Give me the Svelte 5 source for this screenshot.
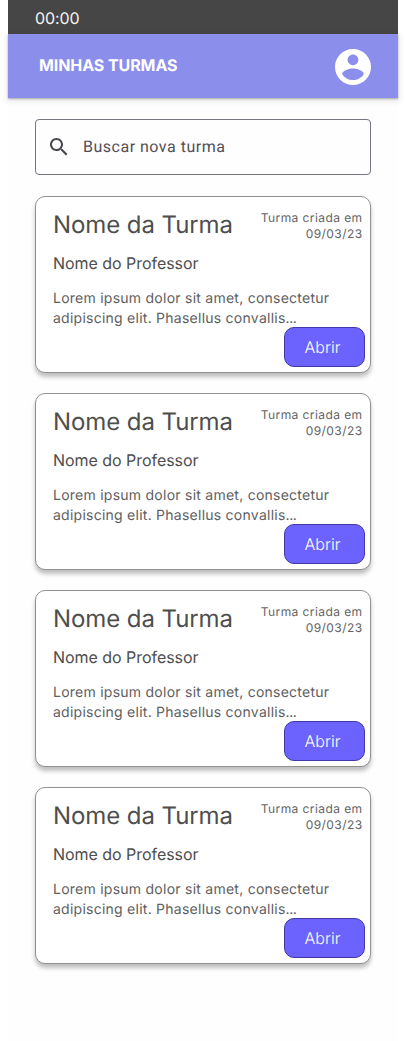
<script>
  const classes = Array.from({ length: 4 }, (_, id) => ({
    id,
    name: 'Nome da Turma',
    teacher: 'Nome do Professor',
    created: '09/03/23',
    description: ['Lorem ipsum dolor sit amet, consectetur', 'adipiscing elit. Phasellus convallis', '...']
  }));
</script>

<main class="screen">
  <div class="status">00:00</div>
  <header class="topbar">
    <h1>MINHAS TURMAS</h1>
    <svg class="avatar" viewBox="2 2 20 20" aria-hidden="true">
      <path fill="#fff" d="M12 2C6.48 2 2 6.48 2 12s4.48 10 10 10 10-4.48 10-10S17.52 2 12 2zm0 3c1.66 0 3 1.34 3 3s-1.34 3-3 3-3-1.34-3-3 1.34-3 3-3zm0 14.200c-2.500 0-4.710-1.280-6-3.220.030-1.990 4-3.080 6-3.080 1.990 0 5.970 1.090 6 3.080-1.290 1.940-3.500 3.220-6 3.220z" />
    </svg>
  </header>

  <div class="content">
    <div class="search">
      <svg viewBox="0 0 24 24" aria-hidden="true">
        <path fill="#49454f" d="M15.500 14h-.790l-.280-.270C15.410 12.590 16 11.110 16 9.500 16 5.910 13.090 3 9.500 3S3 5.910 3 9.500 5.910 16 9.500 16c1.610 0 3.090-.590 4.230-1.570l.270.280v.790l5 4.990L20.490 19l-4.990-5zm-6 0C7.010 14 5 11.990 5 9.500S7.010 5 9.500 5 14 7.010 14 9.500 11.990 14 9.500 14z" />
      </svg>
      <span>Buscar nova turma</span>
    </div>

    {#each classes as item (item.id)}
      <article class="card">
        <div class="heading">
          <h2>{item.name}</h2>
          <p class="date">Turma criada em<br />{item.created}</p>
        </div>
        <p class="teacher">{item.teacher}</p>
        <p class="description">{item.description[0]}<br />{item.description[1]}<span class="dots">{item.description[2]}</span></p>
        <button type="button">Abrir</button>
      </article>
    {/each}
  </div>
</main>

<style>
  :global(body) {
    background: #fff;
  }

  .screen {
    box-sizing: border-box;
    width: 390px;
    height: 1041px;
    margin: 0 8px;
    background: #fefefe;
    font-family: Inter, sans-serif;
    color: #4e4e4e;
    text-rendering: geometricPrecision;
  }

  h1, h2, p {
    margin: 0;
    font-weight: 400;
  }

  .status {
    box-sizing: border-box;
    height: 34px;
    padding: 8px 27px 0;
    background: #464646;
    color: #f4f4f4;
    font-size: 16px;
    line-height: 20px;
    letter-spacing: -0.12px;
  }

  .topbar {
    box-sizing: border-box;
    height: 64px;
    display: flex;
    align-items: center;
    justify-content: space-between;
    padding: 0 27px 0 31px;
    background: #8c8eec;
    box-shadow: 0 1px 2px rgba(0, 0, 0, 0.3), 0 2px 6px 2px rgba(0, 0, 0, 0.07);
  }

  h1 {
    padding-bottom: 2px;
    color: #fff;
    font-size: 16px;
    line-height: 20px;
    font-weight: 700;
    letter-spacing: -0.08px;
  }

  .avatar {
    width: 36px;
    height: 36px;
    margin-top: 2px;
  }

  .content {
    display: flex;
    flex-direction: column;
    padding: 21px 27px 0;
  }

  .search {
    box-sizing: border-box;
    height: 56px;
    margin-bottom: 21px;
    display: flex;
    align-items: center;
    gap: 12px;
    padding-left: 11px;
    border: 1px solid #79747e;
    border-radius: 4px;
    color: #524e58;
    font: 16px/24px Roboto, sans-serif;
    letter-spacing: 0.5px;
  }

  .search svg {
    width: 24px;
    height: 24px;
  }

  .card {
    box-sizing: border-box;
    height: 177px;
    margin-bottom: 20px;
    display: flex;
    flex-direction: column;
    padding: 11px 5px 5px 17px;
    border: 1px solid #919191;
    border-radius: 10px;
    background: #fff;
    box-shadow: 0 4px 4px rgba(0, 0, 0, 0.25);
  }

  .card > * {
    flex-shrink: 0;
  }

  .heading {
    height: 45px;
    display: flex;
    justify-content: space-between;
    padding-right: 2px;
  }

  h2 {
    padding-top: 1px;
    font-size: 24px;
    line-height: 32px;
    letter-spacing: -0.08px;
  }

  .date {
    padding-top: 2px;
    padding-right: 0.5px;
    color: #646464;
    font-size: 12px;
    line-height: 16px;
    letter-spacing: 0.42px;
    text-align: right;
  }

  .teacher {
    height: 36px;
    font-size: 16px;
    line-height: 20px;
    letter-spacing: -0.04px;
  }

  .description {
    height: 38px;
    color: #606060;
    font-size: 14px;
    line-height: 20px;
    letter-spacing: 0.25px;
  }

  .dots {
    letter-spacing: -0.4px;
  }

  button {
    box-sizing: border-box;
    width: 81px;
    height: 40px;
    align-self: flex-end;
    padding: 0 4px 0 0;
    border: 1px solid #4038a4;
    border-radius: 10px;
    background: #6c63ff;
    color: #fff;
    font: 300 16px/20px Inter, sans-serif;
    text-rendering: geometricPrecision;
  }
</style>
